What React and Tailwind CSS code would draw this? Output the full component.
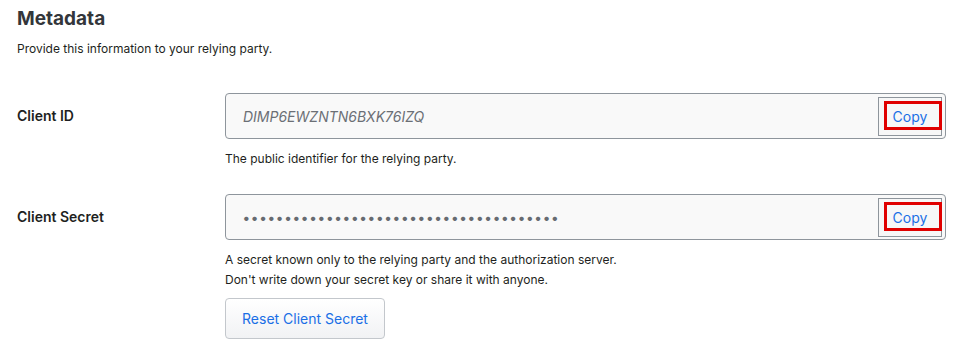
import React from 'react'

const SECRET = '•'.repeat(38)

function CopyField({ value, italic }) {
  return (
    <div className="relative flex h-[46px] items-center rounded-[4px] border border-[#8e959c] bg-[#f9f9f9] pl-[17px] pr-[3px]">
      <div
        className={
          italic
            ? 'flex-1 text-[14px] italic text-[#6b6f75]'
            : 'flex-1 text-[14px] font-bold tracking-[1.7px] text-[#676b71]'
        }
      >
        {value}
      </div>
      <button className="relative h-[39px] w-[64px] border border-[#8e959c] bg-[#f7f7f7] text-[14px] text-[#1a6fe6]">
        Copy
        {/* annotation box */}
        <span className="pointer-events-none absolute left-[5px] top-[3px] h-[29px] w-[58px] border-[3px] border-[#e00000]" />
      </button>
    </div>
  )
}

function Row({ label, children }) {
  return (
    <div className="flex">
      <div className="flex h-[44px] w-[208px] shrink-0 items-center text-[14px] font-semibold text-[#1e1f21]">
        {label}
      </div>
      <div className="flex-1">{children}</div>
    </div>
  )
}

export default function App() {
  return (
    <div
      className="min-h-[352px] w-full bg-white pl-[17px] pr-[13px] pt-[7px] text-[#1e1f21]"
      style={{ fontFamily: 'Inter, "Noto Sans", sans-serif' }}
    >
      <h2 className="text-[19px] font-bold leading-[24px] text-[#33363a]">Metadata</h2>
      <p className="mt-[10px] text-[12px] leading-[16px]">Provide this information to your relying party.</p>

      <div className="mt-[36px]">
        <Row label="Client ID">
          <CopyField value="DIMP6EWZNTN6BXK76IZQ" italic />
          <p className="mt-[12px] text-[12px] leading-[16px]">The public identifier for the relying party.</p>
        </Row>
      </div>

      <div className="mt-[27px]">
        <Row label="Client Secret">
          <CopyField value={SECRET} />
          <p className="mt-[10px] text-[12px] leading-[20px]">
            A secret known only to the relying party and the authorization server.
          </p>
          <p className="text-[12px] leading-[20px]">Don't write down your secret key or share it with anyone.</p>
          <button className="mt-[8px] h-[41px] w-[160px] rounded-[4px] border border-[#c3c7cc] bg-gradient-to-b from-white to-[#f1f2f4] text-[14px] text-[#1a6fe6]">
            Reset Client Secret
          </button>
        </Row>
      </div>
    </div>
  )
}
